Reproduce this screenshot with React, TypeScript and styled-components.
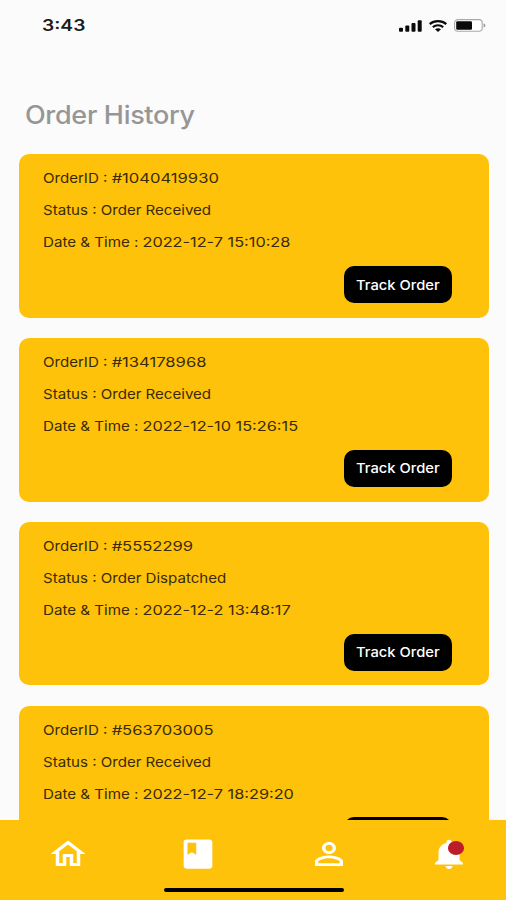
import React from 'react';
import styled, { createGlobalStyle } from 'styled-components';

const GlobalStyle = createGlobalStyle`
  * { box-sizing: border-box; }
  body { margin: 0; background: #fbfbfb; font-family: Inter, "Liberation Sans", sans-serif; }
`;

const Screen = styled.div`
  width: 506px;
  height: 900px;
  display: flex;
  flex-direction: column;
  overflow: hidden;
  background: #fbfbfb;
`;

const StatusBar = styled.header`
  height: 51px;
  flex: none;
  display: flex;
  align-items: center;
  justify-content: space-between;
  padding: 0 20px 0 42px;
`;

const Wide = styled.span<{ $scale: number }>`
  display: inline-block;
  white-space: pre;
  transform: scaleX(${(p) => p.$scale});
  transform-origin: left center;
`;

const Clock = styled.time`
  font-size: 15.5px;
  font-weight: 600;
  line-height: 20px;
  color: #1c1c1c;
`;

const StatusIcons = styled.div`
  display: flex;
  align-items: center;
  gap: 7px;
`;

const Title = styled.h1`
  margin: 0;
  flex: none;
  height: 103px;
  padding: 48px 0 0 25px;
  font-size: 25px;
  font-weight: 500;
  line-height: 32px;
  letter-spacing: -0.3px;
  color: #969696;
`;

const OrderList = styled.main`
  flex: 1;
  min-height: 0;
  overflow: hidden;
  display: flex;
  flex-direction: column;
  gap: 20.4px;
  padding: 0.4px 17.5px 0 18.7px;
`;

const Card = styled.article`
  flex: none;
  height: 163.4px;
  display: flex;
  flex-direction: column;
  padding: 7.8px 36.5px 0 24.5px;
  border-radius: 10px;
  background: #ffc20a;
`;

const Line = styled.p`
  margin: 0;
  height: 32px;
  font-size: 13.4px;
  line-height: 32px;
  color: #382b05;
`;

const TrackButton = styled.button`
  align-self: flex-end;
  width: 108px;
  height: 37px;
  margin-top: 7.9px;
  padding: 0 0 0 12px;
  border: 0;
  border-radius: 10px;
  background: #000;
  color: #fff;
  font: 500 13.6px/36px Inter, sans-serif;
  text-align: left;
`;

const NavBar = styled.nav`
  position: relative;
  flex: none;
  height: 80px;
  display: grid;
  grid-template-columns: 130.8px 130.4px 120.8px 42px;
  padding: 16px 0 0 46.5px;
  background: #ffc20a;
`;

const NavItem = styled.a`
  position: relative;
  width: 42px;
  height: 36px;
`;

const NavIcon = styled.svg`
  display: block;
  width: 42px;
  height: 36px;
  fill: #fff;
`;

const Badge = styled.span`
  position: absolute;
  top: 5px;
  right: 6.5px;
  width: 16px;
  height: 13.5px;
  border-radius: 50%;
  background: #bd1c2b;
`;

const HomeIndicator = styled.span`
  position: absolute;
  left: 163.5px;
  bottom: 8px;
  width: 180.5px;
  height: 4.4px;
  border-radius: 3px;
  background: #000;
`;

const orders = [
  { id: '1040419930', status: 'Order Received', date: '2022-12-7 15:10:28' },
  { id: '134178968', status: 'Order Received', date: '2022-12-10 15:26:15' },
  { id: '5552299', status: 'Order Dispatched', date: '2022-12-2 13:48:17' },
  { id: '563703005', status: 'Order Received', date: '2022-12-7 18:29:20' },
];

const navItems = [
  { label: 'Home', path: 'M12 5.69l5 4.5V18h-2v-6H9v6H7v-7.81l5-4.5M12 3L2 12h3v8h6v-6h2v6h6v-8h3L12 3z' },
  { label: 'Orders', path: 'M18.3 2.3H5.7c-1.1 0-1.9.8-1.9 1.7v16c0 1 .8 1.8 1.9 1.8h12.6c1.1 0 1.9-.8 1.9-1.8V4c0-.9-.8-1.7-1.9-1.7zM6 4.5h5v8l-2.5-1.7L6 12.5V4.5z' },
  { label: 'Profile', path: 'M12 5.9c1.16 0 2.1.94 2.1 2.1s-.94 2.1-2.1 2.1S9.9 9.16 9.9 8s.94-2.1 2.1-2.1m0 9c2.97 0 6.1 1.46 6.1 2.1v1.1H5.9V17c0-.64 3.13-2.1 6.1-2.1M12 4C9.79 4 8 5.79 8 8s1.79 4 4 4 4-1.79 4-4-1.79-4-4-4zm0 9c-2.67 0-8 1.34-8 4v3h16v-3c0-2.66-5.33-4-8-4z' },
  { label: 'Notifications', badge: true, path: 'M12 22c1.1 0 2-.9 2-2h-4c0 1.1.89 2 2 2zm6-6v-5c0-3.07-1.64-5.64-4.5-6.32V4c0-.83-.67-1.5-1.5-1.5s-1.5.67-1.5 1.5v.68C7.63 5.36 6 7.92 6 11v5l-2 2v1h16v-1l-2-2z' },
];

export default function App() {
  return (
    <Screen>
      <GlobalStyle />
      <StatusBar>
        <Clock><Wide $scale={1.24}>3:43</Wide></Clock>
        <StatusIcons>
          <svg width="23" height="12" viewBox="0 0 23 12" fill="#0a0a0a">
            <rect x="0" y="7.8" width="4" height="4" rx="1" />
            <rect x="6.3" y="5.4" width="4" height="6.4" rx="1" />
            <rect x="12.5" y="3" width="4" height="8.8" rx="1" />
            <rect x="18.7" y="0.2" width="4" height="11.6" rx="1" />
          </svg>
          <svg width="18" height="12" viewBox="0 0 18 12" fill="none" stroke="#0a0a0a" strokeWidth="2.1">
            <path d="M0.7 4.1C5.2 0.1 12.8 0.1 17.3 4.1" />
            <path d="M3.8 7.1C6.8 4.6 11.2 4.6 14.2 7.1" />
            <path d="M6 9.3C7.8 8 10.2 8 12 9.3L9 11.9Z" fill="#0a0a0a" stroke="none" />
          </svg>
          <svg width="32" height="13" viewBox="0 0 32 13">
            <rect x="0.6" y="0.6" width="27.6" height="11.6" rx="3.2" fill="#fff" stroke="#a8a8a8" strokeWidth="1.1" />
            <rect x="2.2" y="2.2" width="15.8" height="8.5" rx="1.2" fill="#0a0a0a" />
            <path d="M29.6 4.2C32 5 32 7.8 29.6 8.6Z" fill="#999" />
          </svg>
        </StatusIcons>
      </StatusBar>
      <Title><Wide $scale={1.08}>Order History</Wide></Title>
      <OrderList>
        {orders.map((order) => (
          <Card key={order.id}>
            <Line><Wide $scale={1.125}>OrderID : <Wide $scale={1.1}>{`#${order.id}`}</Wide></Wide></Line>
            <Line><Wide $scale={1.125}>{`Status : ${order.status}`}</Wide></Line>
            <Line><Wide $scale={1.13}>Date & Time : <Wide $scale={1.077}>{order.date}</Wide></Wide></Line>
            <TrackButton><Wide $scale={1.085}>Track Order</Wide></TrackButton>
          </Card>
        ))}
      </OrderList>
      <NavBar>
        {navItems.map((item) => (
          <NavItem key={item.label} aria-label={item.label}>
            <NavIcon viewBox="0 0 24 24" preserveAspectRatio="none"><path d={item.path} /></NavIcon>
            {item.badge && <Badge />}
          </NavItem>
        ))}
        <HomeIndicator />
      </NavBar>
    </Screen>
  );
}
